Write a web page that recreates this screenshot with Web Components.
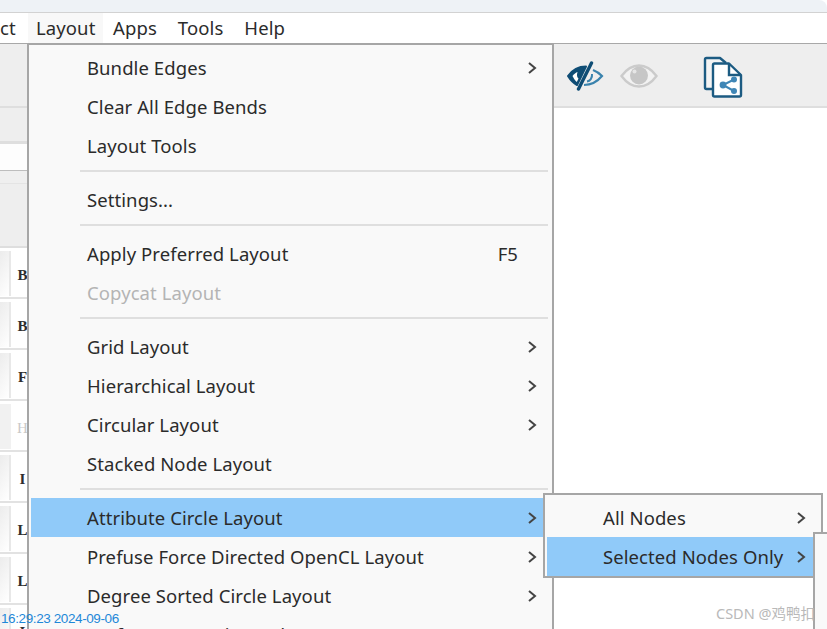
<!DOCTYPE html>
<html>
<head>
<meta charset="utf-8">
<title>Layout menu</title>
<style>
  html, body { margin: 0; padding: 0; background: #fff; }
  body { font-family: "Noto Sans", "Noto Sans CJK SC", sans-serif; }
</style>
</head>
<body>
<app-window>
  <title-strip></title-strip>
  <menu-bar>
    <span class="cut">ct</span>
    <span class="open">Layout</span>
    <span class="wide">Apps</span>
    <span class="wide">Tools</span>
    <span>Help</span>
  </menu-bar>
  <tool-bar></tool-bar>
  <main-area></main-area>

  <popup-menu style="left:27px;top:43px;width:519px;height:640px">
    <menu-item arrow>Bundle Edges</menu-item>
    <menu-item>Clear All Edge Bends</menu-item>
    <menu-item>Layout Tools</menu-item>
    <menu-sep></menu-sep>
    <menu-item>Settings...</menu-item>
    <menu-sep></menu-sep>
    <menu-item shortcut="F5">Apply Preferred Layout</menu-item>
    <menu-item disabled>Copycat Layout</menu-item>
    <menu-sep></menu-sep>
    <menu-item arrow>Grid Layout</menu-item>
    <menu-item arrow>Hierarchical Layout</menu-item>
    <menu-item arrow>Circular Layout</menu-item>
    <menu-item>Stacked Node Layout</menu-item>
    <menu-sep></menu-sep>
    <menu-item arrow active>Attribute Circle Layout</menu-item>
    <menu-item arrow>Prefuse Force Directed OpenCL Layout</menu-item>
    <menu-item arrow>Degree Sorted Circle Layout</menu-item>
    <menu-item arrow>Prefuse Force Directed Layout</menu-item>
  </popup-menu>

  <popup-menu style="left:543px;top:493px;width:272px">
    <menu-item arrow>All Nodes</menu-item>
    <menu-item arrow active>Selected Nodes Only</menu-item>
  </popup-menu>

  <popup-menu style="left:813px;top:532px;width:40px;height:120px"></popup-menu>

  <stamp-label>16:29:23 2024-09-06</stamp-label>
  <water-mark>CSDN @鸡鸭扣</water-mark>
</app-window>

<script>
// small helper so each component only declares its css + markup
function shadow(el, html) {
  el.attachShadow({ mode: "open" }).innerHTML = html;
}

class AppWindow extends HTMLElement {
  constructor() {
    super();
    shadow(this, `
      <style>
        :host {
          display: flex;
          flex-direction: column;
          position: relative;
          width: 827px;
          height: 629px;
          overflow: hidden;
          background: #fff;
          color: #2b2b2b;
          font-family: "Noto Sans", "Noto Sans CJK SC", sans-serif;
        }
      </style>
      <slot></slot>
    `);
  }
}

class TitleStrip extends HTMLElement {
  constructor() {
    super();
    shadow(this, `
      <style>
        :host {
          display: block;
          flex: none;
          height: 12px;
          background: #eef2f6;
          border-bottom: 1px solid #d2d2d2;
          border-top-right-radius: 8px;
        }
      </style>
    `);
  }
}

class MenuBar extends HTMLElement {
  constructor() {
    super();
    shadow(this, `
      <style>
        :host {
          display: flex;
          flex: none;
          height: 30px;
          align-items: center;
          background: #fff;
          border-bottom: 1px solid #a8a8a8;
          font-size: 18.5px;
          letter-spacing: 0.1px;
          overflow: hidden;
        }
        ::slotted(span) {
          display: flex;
          align-items: center;
          box-sizing: border-box;
          height: 30px;
          padding: 0 9px 2px;
          margin-right: 2px;
        }
        ::slotted(span.wide) {
          margin-right: 3px;
        }
        ::slotted(span.cut) {
          width: 28px;
          padding: 0 0 2px;
          margin: 0;
        }
        ::slotted(span.open) {
          width: 75px;
          padding-left: 8px;
          margin-right: 1px;
          background: #f8f8f8;
        }
      </style>
      <slot></slot>
    `);
  }
}

class ToolBar extends HTMLElement {
  constructor() {
    super();
    shadow(this, `
      <style>
        :host {
          display: flex;
          flex: none;
          height: 62px;
          align-items: center;
          background: #eeeeee;
          border-bottom: 2px solid #dedede;
          padding-left: 566px;
        }
        svg { display: block; flex: none; }
        .eye1 { margin-top: 2px; }
        .eye2 { margin-left: 16px; margin-top: 2px; }
        .docs { margin-left: 45px; margin-top: 3px; }
      </style>
      <svg class="eye1" width="38" height="30" viewBox="0 0 38 30">
        <path d="M2 15 C7 8 13 5.5 20 5.5 L11 24 C8 22.5 4.5 19 2 15 Z" fill="#0f4d75" stroke="#0f4d75" stroke-width="2" stroke-linejoin="round"/>
        <path d="M6.500 15 C8 13 10 11.500 11.500 11 C10.500 14 11 16.500 12.500 17.500 L10.800 21 C9 19.500 7.500 17 6.500 15 Z" fill="#fff"/>
        <path d="M25.5 2 L12.5 28" stroke="#0f4d75" stroke-width="3.4" stroke-linecap="round"/>
        <path d="M27 9 C31 10.5 34 13 36 15 C31 21 25 24 18 24" fill="none" stroke="#3a83ad" stroke-width="2.2"/>
        <path d="M26 13 C26.5 17 24 20 21 20.5" fill="none" stroke="#3a83ad" stroke-width="2"/>
      </svg>
      <svg class="eye2" width="38" height="26" viewBox="0 0 38 26">
        <path d="M1.5 13 C7 5.5 13 2.5 19 2.5 C25 2.5 31 5.5 36.5 13 C31 20.5 25 23.5 19 23.5 C13 23.5 7 20.5 1.5 13 Z" fill="#f2f2f2" stroke="#cbcbcb" stroke-width="2.4"/>
        <circle cx="19" cy="12.5" r="9" fill="#c6c6c6"/>
        <circle cx="14.5" cy="8.5" r="2" fill="#e6e6e6"/>
      </svg>
      <svg width="40" height="42" class="docs" viewBox="0 0 40 42">
        <path d="M9 33 H3.5 Q2 33 2 31.5 V3.5 Q2 2 3.5 2 H17 L23 7" fill="#f4f4f4" stroke="#1c5b82" stroke-width="2.4" stroke-linejoin="round"/>
        <path d="M10 9 Q10 7.5 11.500 7.500 H26 L38 19 V39 Q38 40.500 36.500 40.500 H11.500 Q10 40.500 10 39 Z" fill="#fff" stroke="#1c5b82" stroke-width="2.4" stroke-linejoin="round"/>
        <path d="M26 7.500 V19 H38" fill="none" stroke="#1c5b82" stroke-width="2.4"/>
        <path d="M31 23.500 L20 29 L31 35" fill="none" stroke="#3f86b6" stroke-width="2"/>
        <circle cx="31" cy="23.500" r="3" fill="#3f86b6"/>
        <circle cx="20" cy="29" r="3.400" fill="#3f86b6"/>
        <circle cx="31" cy="35" r="3" fill="#3f86b6"/>
      </svg>
    `);
  }
}

class MainArea extends HTMLElement {
  constructor() {
    super();
    shadow(this, `
      <style>
        :host {
          display: flex;
          flex: 1;
          min-height: 0;
          background: #fff;
        }
      </style>
      <side-panel></side-panel>
    `);
  }
}

class SidePanel extends HTMLElement {
  constructor() {
    super();
    const rows = ["B", "B", "F", "H", "I", "L", "L", "I"];
    shadow(this, `
      <style>
        :host {
          display: flex;
          flex-direction: column;
          flex: none;
          width: 28px;
        }
        .tabs { height: 33px; background: #eeeeee; flex: none; }
        .line { height: 3px; flex: none; background: #dedede; }
        .input { height: 26px; flex: none; background: #fdfdfd; border-bottom: 1px solid #bdbdbd; }
        .head { height: 12px; flex: none; background: #efefef; border-bottom: 1px solid #e4e4e4; }
        .head2 { height: 62px; flex: none; background: #eeeeee; border-bottom: 2px solid #dedede; }
      </style>
      <div class="tabs"></div>
      <div class="line"></div>
      <div class="input"></div>
      <div class="head"></div>
      <div class="head2"></div>
      ${rows.map((r) => `<table-row ${r === "H" ? "disabled" : ""}>${r}</table-row>`).join("")}
    `);
  }
}

class TableRow extends HTMLElement {
  constructor() {
    super();
    shadow(this, `
      <style>
        :host {
          display: flex;
          flex: none;
          height: 49px;
          box-sizing: content-box;
          align-items: stretch;
          border-bottom: 2px solid #e2e2e2;
          background: #fff;
        }
        .cell {
          width: 9px;
          flex: none;
          margin: 3px 0 1px;
          background: linear-gradient(120deg, #ececec, #ffffff);
          border-right: 2px solid #e8e8e8;
        }
        :host([disabled]) .cell { background: #f1f1f1; border-right-color: #f1f1f1; }
        .letter {
          width: 12px;
          margin-left: 6px;
          padding-top: 6px;
          display: flex;
          align-items: center;
          justify-content: center;
          font: bold 15px "Liberation Serif", "Noto Sans CJK SC", serif;
          color: #2d2d2d;
        }
        :host([disabled]) .letter { color: #c9c9c9; font-weight: normal; }
      </style>
      <div class="cell"></div>
      <div class="letter"><slot></slot></div>
    `);
  }
}

class PopupMenu extends HTMLElement {
  constructor() {
    super();
    shadow(this, `
      <style>
        :host {
          display: block;
          position: absolute;
          box-sizing: content-box;
          background: #f9f9f9;
          border: 2px solid #a6a6a6;
          padding: 3px 2px 0 2px;
        }
      </style>
      <slot></slot>
    `);
  }
}

class MenuItem extends HTMLElement {
  constructor() {
    super();
    const shortcut = this.getAttribute("shortcut");
    const arrow = this.hasAttribute("arrow");
    shadow(this, `
      <style>
        :host {
          display: flex;
          align-items: center;
          height: 39px;
          padding-left: 56px;
          font-size: 18.5px;
          letter-spacing: 0.08px;
          color: #2b2b2b;
          white-space: nowrap;
        }
        :host([active]) { background: #90caf9; }
        :host([disabled]) { color: #b4b4b4; }
        .label { flex: 1; padding-bottom: 1px; }
        .key { margin-right: 32px; padding-bottom: 1px; }
        .arrow { display: block; flex: none; margin-right: 13px; }
      </style>
      <span class="label"><slot></slot></span>
      ${shortcut ? `<span class="key">${shortcut}</span>` : ""}
      ${arrow ? `<svg class="arrow" width="10" height="14" viewBox="0 0 10 14"><path d="M2 2 L8 7 L2 12" fill="none" stroke="#444" stroke-width="2"/></svg>` : ""}
    `);
  }
}

class MenuSep extends HTMLElement {
  constructor() {
    super();
    shadow(this, `
      <style>
        :host {
          display: block;
          height: 15px;
          box-sizing: border-box;
          padding: 5px 2px 0 49px;
        }
        div { height: 2px; background: #dfdfdf; }
      </style>
      <div></div>
    `);
  }
}

class StampLabel extends HTMLElement {
  constructor() {
    super();
    shadow(this, `
      <style>
        :host {
          display: block;
          position: absolute;
          left: 1px;
          top: 610px;
          font: 13.5px/17px "Liberation Sans", sans-serif;
          letter-spacing: -0.4px;
          color: #1e88d8;
          white-space: nowrap;
        }
      </style>
      <slot></slot>
    `);
  }
}

class WaterMark extends HTMLElement {
  constructor() {
    super();
    shadow(this, `
      <style>
        :host {
          display: block;
          position: absolute;
          left: 716px;
          top: 603px;
          font: 14.5px/20px "Noto Sans", "Noto Sans CJK SC", sans-serif;
          color: #b9b9b9;
          white-space: nowrap;
        }
      </style>
      <slot></slot>
    `);
  }
}

customElements.define("app-window", AppWindow);
customElements.define("title-strip", TitleStrip);
customElements.define("menu-bar", MenuBar);
customElements.define("tool-bar", ToolBar);
customElements.define("main-area", MainArea);
customElements.define("side-panel", SidePanel);
customElements.define("table-row", TableRow);
customElements.define("popup-menu", PopupMenu);
customElements.define("menu-item", MenuItem);
customElements.define("menu-sep", MenuSep);
customElements.define("stamp-label", StampLabel);
customElements.define("water-mark", WaterMark);
</script>
</body>
</html>
